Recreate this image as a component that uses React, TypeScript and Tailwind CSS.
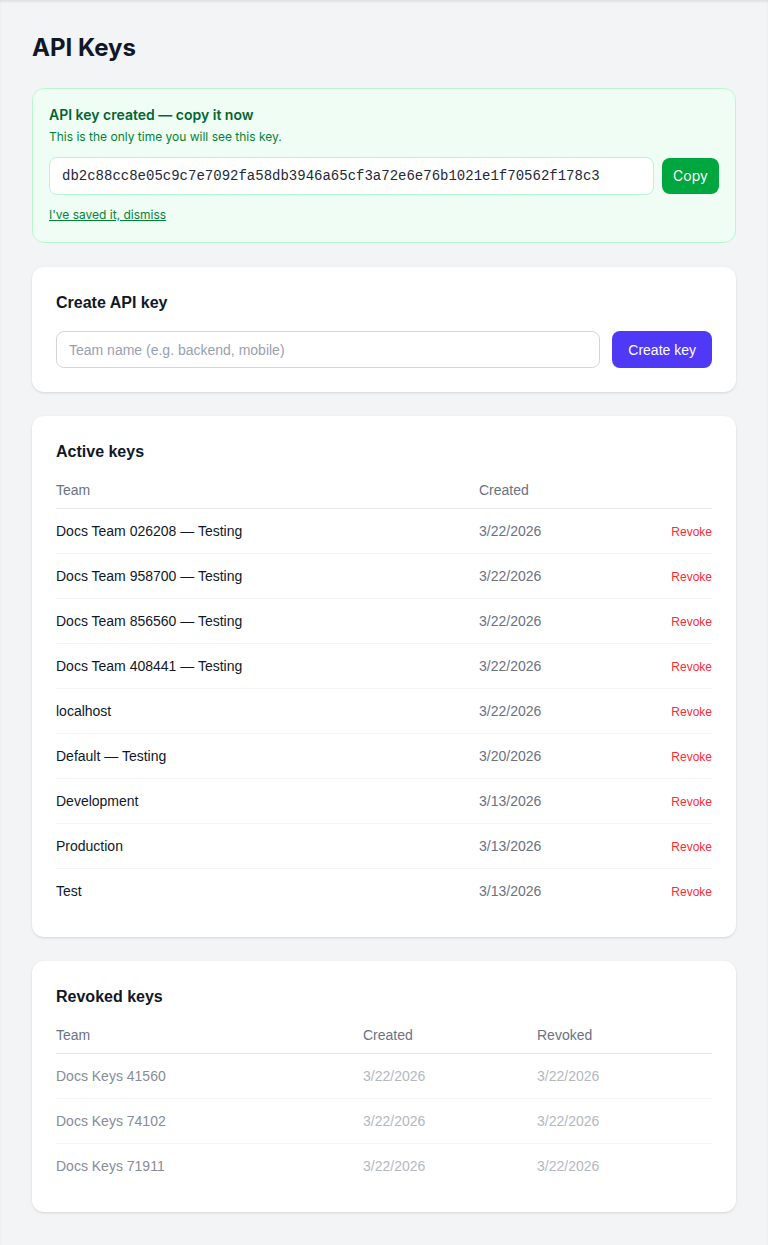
import type React from 'react';

const activeKeys = [
  { team: 'Docs Team 026208 — Testing', created: '3/22/2026' },
  { team: 'Docs Team 958700 — Testing', created: '3/22/2026' },
  { team: 'Docs Team 856560 — Testing', created: '3/22/2026' },
  { team: 'Docs Team 408441 — Testing', created: '3/22/2026' },
  { team: 'localhost', created: '3/22/2026' },
  { team: 'Default — Testing', created: '3/20/2026' },
  { team: 'Development', created: '3/13/2026' },
  { team: 'Production', created: '3/13/2026' },
  { team: 'Test', created: '3/13/2026' },
];

const revokedKeys = [
  { team: 'Docs Keys 41560', created: '3/22/2026', revoked: '3/22/2026' },
  { team: 'Docs Keys 74102', created: '3/22/2026', revoked: '3/22/2026' },
  { team: 'Docs Keys 71911', created: '3/22/2026', revoked: '3/22/2026' },
];

export default function App() {
  return (
    <main className="min-h-screen bg-gray-100 p-8 shadow-[inset_0_2px_2px_rgba(0,0,0,0.08)] font-['Liberation_Sans',Arial,sans-serif]">
      <h1 className="font-['Inter',sans-serif] text-2xl font-bold text-gray-900">API Keys</h1>

      <section className="mt-6 rounded-xl border border-green-200 bg-green-50 p-4 font-['Inter',sans-serif]">
        <h2 className="text-sm font-semibold text-green-800">API key created — copy it now</h2>
        <p className="mt-1 text-xs text-green-700">This is the only time you will see this key.</p>
        <div className="mt-3 flex gap-2">
          <input
            readOnly
            value="db2c88cc8e05c9c7e7092fa58db3946a65cf3a72e6e76b1021e1f70562f178c3"
            className="h-[38px] flex-1 rounded-lg border border-green-200 bg-white px-3 font-['Liberation_Mono',monospace] text-sm text-gray-800 outline-none"
          />
          <button className="h-9 w-[57px] self-center rounded-lg bg-green-600 text-sm text-white">Copy</button>
        </div>
        <button className="mt-3 mb-[3px] block text-xs leading-4 text-green-700 underline">I've saved it, dismiss</button>
      </section>

      <Card title="Create API key" className="mt-6">
        <div className="mt-4 flex gap-3">
          <input
            placeholder="Team name (e.g. backend, mobile)"
            className="h-[37px] flex-1 rounded-lg border border-gray-300 px-3 text-sm text-gray-900 placeholder:text-gray-400 outline-none"
          />
          <button className="h-[37px] rounded-lg bg-indigo-600 px-4 text-sm text-white">Create key</button>
        </div>
      </Card>

      <Card title="Active keys" className="mt-6">
        <div className="mt-4 text-sm">
          <div className="grid grid-cols-[423px_1fr_auto] border-b border-gray-200 pb-2 text-gray-500">
            <span>Team</span>
            <span>Created</span>
            <span />
          </div>
          {activeKeys.map((k, i) => (
            <div
              key={k.team}
              className={`grid grid-cols-[423px_1fr_auto] items-center py-3 ${i < activeKeys.length - 1 ? 'border-b border-gray-100' : ''}`}
            >
              <span className="text-gray-900">{k.team}</span>
              <span className="text-gray-500">{k.created}</span>
              <button className="pt-0.5 text-xs text-red-500">Revoke</button>
            </div>
          ))}
        </div>
      </Card>

      <Card title="Revoked keys" className="mt-6">
        <div className="mt-4 text-sm">
          <div className="grid grid-cols-[307px_174px_1fr] border-b border-gray-200 pb-2 text-gray-500">
            <span>Team</span>
            <span>Created</span>
            <span>Revoked</span>
          </div>
          {revokedKeys.map((k, i) => (
            <div
              key={k.team}
              className={`grid grid-cols-[307px_174px_1fr] py-3 ${i < revokedKeys.length - 1 ? 'border-b border-gray-100' : ''}`}
            >
              <span className="text-[#878c96]">{k.team}</span>
              <span className="text-[#b4b8c0]">{k.created}</span>
              <span className="text-[#b4b8c0]">{k.revoked}</span>
            </div>
          ))}
        </div>
      </Card>
    </main>
  );
}

function Card({ title, className, children }: { title: string; className?: string; children: React.ReactNode }) {
  return (
    <section className={`rounded-xl bg-white p-6 shadow-sm ${className ?? ''}`}>
      <h2 className="text-base font-bold text-gray-900">{title}</h2>
      {children}
    </section>
  );
}
